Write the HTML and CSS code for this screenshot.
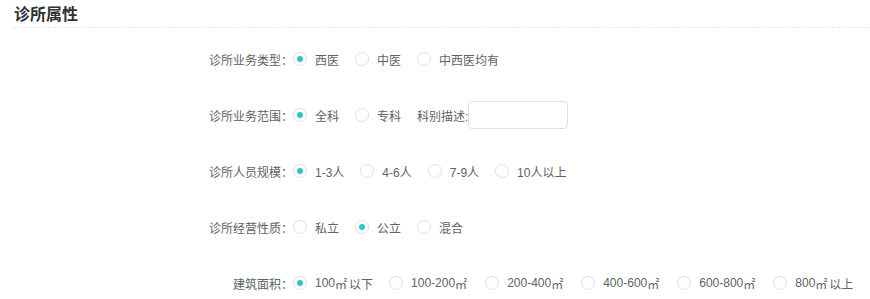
FILE: index.html
```html
<!DOCTYPE html>
<html lang="zh-CN">
<head>
    <meta charset="UTF-8">
    <title>诊所属性</title>
    <link rel="stylesheet" href="styles.css">
</head>
<body>
    <div class="section">
        <div class="section-title">诊所属性</div>

        <div class="form">
            <div class="form-row">
                <label class="form-label">诊所业务类型：</label>
                <div class="options">
                    <span class="radio-item"><span class="radio checked"></span>西医</span>
                    <span class="radio-item"><span class="radio"></span>中医</span>
                    <span class="radio-item"><span class="radio"></span>中西医均有</span>
                </div>
            </div>

            <div class="form-row">
                <label class="form-label">诊所业务范围：</label>
                <div class="options">
                    <span class="radio-item"><span class="radio checked"></span>全科</span>
                    <span class="radio-item"><span class="radio"></span>专科</span>
                    <span class="sub-label">科别描述:</span>
                    <input class="text-input" type="text">
                </div>
            </div>

            <div class="form-row">
                <label class="form-label">诊所人员规模：</label>
                <div class="options">
                    <span class="radio-item"><span class="radio checked"></span>1-3人</span>
                    <span class="radio-item"><span class="radio"></span>4-6人</span>
                    <span class="radio-item"><span class="radio"></span>7-9人</span>
                    <span class="radio-item"><span class="radio"></span>10人以上</span>
                </div>
            </div>

            <div class="form-row">
                <label class="form-label">诊所经营性质：</label>
                <div class="options">
                    <span class="radio-item"><span class="radio"></span>私立</span>
                    <span class="radio-item"><span class="radio checked"></span>公立</span>
                    <span class="radio-item"><span class="radio"></span>混合</span>
                </div>
            </div>

            <div class="form-row">
                <label class="form-label">建筑面积：</label>
                <div class="options">
                    <span class="radio-item"><span class="radio checked"></span>100<span class="unit">㎡</span>以下</span>
                    <span class="radio-item"><span class="radio"></span>100-200<span class="unit">㎡</span></span>
                    <span class="radio-item"><span class="radio"></span>200-400<span class="unit">㎡</span></span>
                    <span class="radio-item"><span class="radio"></span>400-600<span class="unit">㎡</span></span>
                    <span class="radio-item"><span class="radio"></span>600-800<span class="unit">㎡</span></span>
                    <span class="radio-item"><span class="radio"></span>800<span class="unit">㎡</span>以上</span>
                </div>
            </div>
        </div>
    </div>
</body>
</html>
```

FILE: styles.css
```css
body {
    margin: 0;
    background-color: #fff;
    font-family: 'Liberation Sans', 'Noto Sans CJK SC', sans-serif;
    font-size: 12px;
    color: #606266;
}

.section {
    padding-left: 13px;
}

.section-title {
    height: 28px;
    line-height: 26px;
    padding-left: 1px;
    box-sizing: border-box;
    font-family: 'Noto Sans CJK SC', sans-serif;
    font-size: 16px;
    font-weight: bold;
    color: #303133;
    border-bottom: 1px dashed #ebebeb;
}

.form {
    padding-top: 17px;
}

.form-row {
    display: flex;
    align-items: center;
    height: 28px;
    margin-bottom: 28px;
}

.form-label {
    width: 280px;
    text-align: right;
    font-family: 'Noto Sans CJK SC', sans-serif;
    flex-shrink: 0;
}

.options {
    display: flex;
    align-items: center;
}

.radio-item {
    display: flex;
    align-items: center;
    margin-right: 16px;
    white-space: nowrap;
}

.radio {
    width: 12px;
    height: 12px;
    border: 1px solid #dcdfe6;
    border-radius: 50%;
    margin-right: 8px;
    display: flex;
    align-items: center;
    justify-content: center;
    box-sizing: content-box;
}

.radio.checked::after {
    content: '';
    width: 6px;
    height: 6px;
    border-radius: 50%;
    background-color: #2ec7c9;
}

/* square-metre sign is a bit wider in the original font */
.unit {
    margin-right: 2px;
}

.sub-label {
    white-space: nowrap;
}

.text-input {
    width: 100px;
    height: 28px;
    box-sizing: border-box;
    border: 1px solid #dcdfe6;
    border-radius: 4px;
    outline: none;
    padding: 0 8px;
    margin: 0;
}
```
